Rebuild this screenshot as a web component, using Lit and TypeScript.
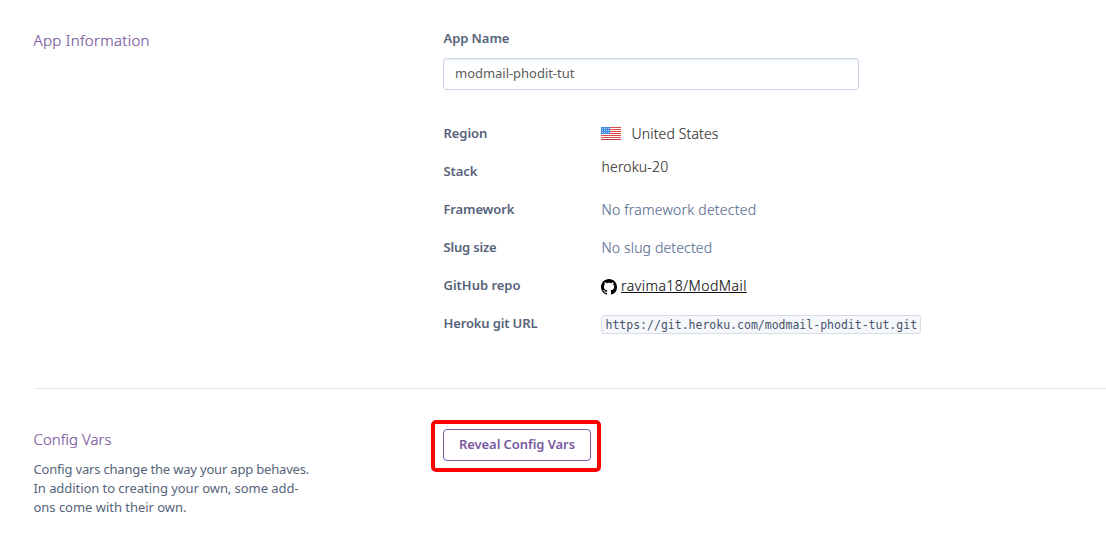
import { LitElement, html, css, svg } from "lit";
import { customElement } from "lit/decorators.js";

@customElement("us-flag")
class UsFlag extends LitElement {
  static styles = css`
    :host { display: block; width: 20px; height: 13px; }
    svg { display: block; }
  `;
  render() {
    return html`<svg width="20" height="13" viewBox="0 0 20 13" shape-rendering="crispEdges">
      <rect width="20" height="13" fill="#fff" />
      ${[0, 2, 4, 6, 8, 10, 12].map((y) => svg`<rect y=${y} width="20" height="1" fill=${y === 12 ? "#b8403c" : "#dc4b45"} />`)}
      <rect width="9" height="7" fill="#3f8ae8" />
      ${[1, 3, 5].map((y) => [1, 3, 5, 7].map((x) => svg`<rect x=${x} y=${y} width="1" height="1" fill="#b5d6fa" />`))}
    </svg>`;
  }
}

@customElement("github-mark")
class GithubMark extends LitElement {
  static styles = css`
    :host { display: block; width: 16px; height: 16px; }
    svg { display: block; }
  `;
  render() {
    return html`<svg width="16" height="16" viewBox="0 0 16 16" fill="#000">
      <path d="M8 0C3.58 0 0 3.58 0 8c0 3.54 2.29 6.53 5.47 7.59.4.07.55-.17.55-.38 0-.19-.01-.82-.01-1.49-2.01.37-2.53-.49-2.69-.94-.09-.23-.48-.94-.82-1.13-.28-.15-.68-.52-.01-.53.63-.01 1.08.58 1.23.82.72 1.21 1.87.87 2.33.66.07-.52.28-.87.51-1.07-1.78-.2-3.64-.89-3.64-3.95 0-.87.31-1.59.82-2.15-.08-.2-.36-1.02.08-2.12 0 0 .67-.21 2.2.82.64-.18 1.32-.27 2-.27s1.36.09 2 .27c1.53-1.04 2.2-.82 2.2-.82.44 1.1.16 1.92.08 2.12.51.56.82 1.27.82 2.15 0 3.07-1.87 3.75-3.65 3.95.29.25.54.73.54 1.48 0 1.07-.01 1.93-.01 2.2 0 .21.15.46.55.38A8.01 8.01 0 0 0 16 8c0-4.42-3.58-8-8-8z" />
    </svg>`;
  }
}

@customElement("app-root")
class AppRoot extends LitElement {
  static styles = css`
    * { box-sizing: border-box; }
    :host {
      display: block;
      height: 544px;
      overflow: hidden;
      background: #fff;
      color: #4f5b70;
      font: 400 13px/19px "Noto Sans", sans-serif;
    }
    .section { display: grid; grid-template-columns: 409.5px 1fr; margin-left: 33.5px; }
    .info { height: 388px; padding-top: 28px; }
    .config { height: 156px; border-top: 1px solid #e3e8f1; }
    h2 { margin: 0; font-size: 15px; line-height: 24px; font-weight: 300; color: #79589f; -webkit-text-stroke: 0.2px #79589f; }
    .h-info { letter-spacing: 0.3px; }
    .h-config { letter-spacing: 0.05px; }
    .label { font-weight: 600; color: #56627a; padding-left: 0.5px; letter-spacing: -0.07px; }
    .l-fw, .l-url { letter-spacing: -0.14px; }
    .l-slug { letter-spacing: -0.18px; }
    .l-repo { letter-spacing: -0.02px; }
    .name { padding-top: 1px; }
    .input {
      width: 416px; height: 32px; margin-top: 10px; padding: 0 11px;
      border: 1px solid #cbd5e8; border-radius: 3px;
      box-shadow: inset 0 1px 2px #e9eef6;
      line-height: 28px; color: #5c5c5c; letter-spacing: -0.03px;
    }
    .facts { margin-top: 29px; }
    .row { display: grid; grid-template-columns: 158px 1fr; align-items: start; height: 38px; padding-top: 5px; }
    .value { display: flex; align-items: center; height: 19px; font-size: 14px; font-weight: 300; color: #333; -webkit-text-stroke: 0.15px; white-space: nowrap; }
    .muted { color: #5a6f94; padding-left: 0.5px; }
    .region { gap: 10.5px; letter-spacing: 0.14px; }
    .stack { height: 9px; padding-left: 0.5px; letter-spacing: 0.17px; }
    .framework { letter-spacing: 0.23px; }
    .slug { letter-spacing: 0.14px; }
    .repo { gap: 4px; letter-spacing: 0.46px; color: #111; }
    .link { line-height: 19px; text-decoration: underline; text-decoration-thickness: 1px; text-underline-offset: 1px; text-decoration-skip-ink: none; }
    github-mark { margin-top: 2px; }
    .code {
      height: 19px; width: 320px; margin-top: 1px; padding: 0 3.5px;
      border: 1px solid #d8dde6; border-radius: 3px; background: #f5f7fb;
      color: #45536b; font: 400 11.5px/18px "DejaVu Sans Mono", monospace; white-space: nowrap;
    }
    .about { padding-top: 38px; }
    .desc { margin-top: 9px; color: #56647a; white-space: nowrap; }
    .d1 { letter-spacing: -0.185px; }
    .d2 { letter-spacing: -0.06px; }
    .d3 { letter-spacing: -0.03px; }
    .mark {
      width: 170px; height: 52px; margin: 31px 0 0 -12px; padding: 5px 8px;
      border: 4px solid #fe0000; border-radius: 5px;
    }
    button {
      display: block; width: 148px; height: 32px; padding: 0 0 2px;
      border: 1px solid #79589f; border-radius: 4px; background: #fff;
      color: #79589f; font: 600 13px/28px "Noto Sans", sans-serif; letter-spacing: -0.07px; white-space: nowrap;
    }
  `;

  row(label: string, cls: string, value: unknown) {
    return html`<div class="row"><div class="label ${cls}">${label}</div>${value}</div>`;
  }

  render() {
    return html`
      <section class="section info">
        <h2 class="h-info">App Information</h2>
        <div>
          <div class="label name">App Name</div>
          <div class="input">modmail-phodit-tut</div>
          <div class="facts">
            ${this.row("Region", "", html`<div class="value region"><us-flag></us-flag><span>United States</span></div>`)}
            ${this.row("Stack", "", html`<div class="value stack">heroku-20</div>`)}
            ${this.row("Framework", "l-fw", html`<div class="value muted framework">No framework detected</div>`)}
            ${this.row("Slug size", "l-slug", html`<div class="value muted slug">No slug detected</div>`)}
            ${this.row("GitHub repo", "l-repo", html`<div class="value repo"><github-mark></github-mark><span class="link">ravima18/ModMail</span></div>`)}
            ${this.row("Heroku git URL", "l-url", html`<div class="code">https://git.heroku.com/modmail-phodit-tut.git</div>`)}
          </div>
        </div>
      </section>
      <section class="section config">
        <div class="about">
          <h2 class="h-config">Config Vars</h2>
          <div class="desc">
            <div class="d1">Config vars change the way your app behaves.</div>
            <div class="d2">In addition to creating your own, some add-</div>
            <div class="d3">ons come with their own.</div>
          </div>
        </div>
        <div><div class="mark"><button>Reveal Config Vars</button></div></div>
      </section>
    `;
  }
}
